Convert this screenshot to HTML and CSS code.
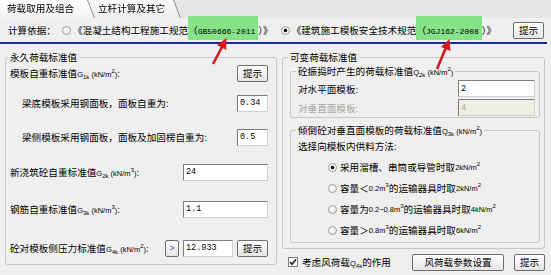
FILE: index.html
```html
<!DOCTYPE html>
<html lang="zh-CN">
<head>
    <meta charset="UTF-8">
    <meta name="viewport" content="width=device-width, initial-scale=1.0">
    <title>荷载取用及组合</title>
    <link rel="stylesheet" href="styles.css">
</head>
<body>
<div class="window">
    <div class="tabbar">
        <div class="tab_wrap"><div class="tab tab_active">荷载取用及组合</div></div>
        <div class="tab_wrap tab_wrap_2"><div class="tab tab_second">立杆计算及其它</div></div>
    </div>

    <div class="basis">
        <span class="caption">计算依据：</span>
        <span class="radio radio_first"></span>
        <span class="norm">《混凝土结构工程施工规范<span class="code_box">（<span class="latin">GB50666-2011</span></span>）》</span>
        <span class="radio radio_on radio_second"></span>
        <span class="norm">《建筑施工模板安全技术规范<span class="code_box">（<span class="latin">JGJ162-2008</span></span>）》</span>
        <button class="btn btn_small btn_basis">提示</button>
    </div>
    <div class="blue_line"></div>

    <div class="panels">
        <fieldset class="group group_left">
            <legend>永久荷载标准值</legend>
            <div class="row row_1">
                <span>模板自重标准值<span class="unit">G<span class="sub">1k</span> (kN/m<span class="sup">2</span>)</span>:</span>
                <button class="btn btn_small">提示</button>
            </div>
            <div class="row row_2 indent">
                <span>梁底模板采用钢面板，面板自重为:</span>
                <input class="field field_short" type="text" value="0.34">
            </div>
            <div class="row row_3 indent">
                <span>梁侧模板采用钢面板，面板及加固楞自重为:</span>
                <input class="field field_short" type="text" value="0.5">
            </div>
            <div class="row row_4">
                <span>新浇筑砼自重标准值<span class="unit">G<span class="sub">2k</span> (kN/m<span class="sup">3</span>)</span>:</span>
                <input class="field field_mid" type="text" value="24">
            </div>
            <div class="row row_5">
                <span>钢筋自重标准值<span class="unit">G<span class="sub">3k</span> (kN/m<span class="sup">3</span>)</span>:</span>
                <input class="field field_mid" type="text" value="1.1">
            </div>
            <div class="row row_6">
                <span>砼对模板侧压力标准值<span class="unit">G<span class="sub">4k</span> (kN/m<span class="sup">2</span>)</span>:</span>
                <div class="controls">
                    <button class="btn btn_arrow">&gt;</button>
                    <input class="field field_calc" type="text" value="12.933">
                    <button class="btn btn_small">提示</button>
                </div>
            </div>
        </fieldset>

        <div class="right_col">
            <fieldset class="group group_right">
                <legend>可变荷载标准值</legend>
                <fieldset class="group sub_1">
                    <legend>砼振捣时产生的荷载标准值<span class="unit">Q<span class="sub">2k</span> (kN/m<span class="sup">2</span>)</span></legend>
                    <div class="row row_h">
                        <span>对水平面模板:</span>
                        <input class="field field_wide" type="text" value="2">
                    </div>
                    <div class="row row_v">
                        <span class="muted">对垂直面模板:</span>
                        <input class="field field_wide" type="text" value="4" disabled>
                    </div>
                </fieldset>
                <fieldset class="group sub_2">
                    <legend>倾倒砼对垂直面模板的荷载标准值<span class="unit">Q<span class="sub">3k</span> (kN/m<span class="sup">2</span>)</span></legend>
                    <div class="method">选择向模板内供料方法:</div>
                    <div class="options">
                        <div class="option"><span class="radio radio_on"></span>采用溜槽、串筒或导管时取<span class="unit">2kN/m<span class="sup">2</span></span></div>
                        <div class="option"><span class="radio"></span>容量＜<span class="unit">0.2m<span class="sup">3</span></span> 的运输器具时取<span class="unit">2kN/m<span class="sup">2</span></span></div>
                        <div class="option"><span class="radio"></span>容量为<span class="unit">0.2~0.8m<span class="sup">3</span></span> 的运输器具时取<span class="unit">4kN/m<span class="sup">2</span></span></div>
                        <div class="option"><span class="radio"></span>容量＞<span class="unit">0.8m<span class="sup">3</span></span> 的运输器具时取<span class="unit">6kN/m<span class="sup">2</span></span></div>
                    </div>
                </fieldset>
            </fieldset>
            <div class="wind_row">
                <span class="check"><svg width="8" height="8" viewBox="0 0 8 8"><path d="M1 4 L3 6.2 L7 1.5" fill="none" stroke="#1b1b1b" stroke-width="1.6"/></svg></span>
                <span class="wind_text">考虑风荷载<span class="unit">Q<span class="sub">4k</span></span>的作用</span>
                <button class="btn btn_wind">风荷载参数设置</button>
                <button class="btn btn_small">提示</button>
            </div>
        </div>
    </div>

    <!-- red annotation arrows drawn over the form -->
    <svg class="arrows" width="551" height="275" viewBox="0 0 551 275">
        <line x1="213" y1="64" x2="222" y2="47" stroke="#d21b1b" stroke-width="2.6"/>
        <polygon points="226.5,38 226.2,50 217,45" fill="#d21b1b"/>
        <line x1="437" y1="69" x2="445.5" y2="48.5" stroke="#d21b1b" stroke-width="2.6"/>
        <polygon points="449.5,39 450.5,51 441,47" fill="#d21b1b"/>
    </svg>
</div>
</body>
</html>
```

FILE: styles.css
```css
body{
    margin: 0;
    background-color: #efefef;
    font-family: "Noto Sans CJK SC", sans-serif;
    font-size: 9.6px;
    color: #000;
}

.window{
    position: relative;
    width: 551px;
    height: 275px;
    overflow: hidden;
}

/* tabs */
.tabbar{
    display: flex;
    height: 18px;
    background-color: #e6e6e6;
}

.tab_wrap{
    filter: drop-shadow(1px 0 0 #8c8c8c);
}

.tab_wrap_2{
    margin-left: -7px;
    filter: drop-shadow(1px 0 0 #8c8c8c) drop-shadow(-1px 0 0 #8c8c8c);
}

.tab{
    height: 18px;
    line-height: 17px;
    box-sizing: border-box;
}

.tab_active{
    width: 95px;
    padding-left: 7px;
    background: linear-gradient(#ffffff, #f2f2f2);
    clip-path: polygon(0 0, 88px 0, 95px 100%, 0 100%);
}

.tab_second{
    width: 92px;
    padding-left: 10px;
    background: linear-gradient(#fbfbfb, #ececec);
    clip-path: polygon(0 0, 85px 0, 92px 100%, 7px 100%);
}

/* basis row */
.basis{
    display: flex;
    align-items: center;
    height: 24px;
    padding-left: 8px;
    white-space: nowrap;
}

.radio{
    display: inline-block;
    width: 9px;
    height: 9px;
    box-sizing: border-box;
    border: 1px solid #9c9c9c;
    border-radius: 50%;
    background: radial-gradient(circle at 40% 40%, #ffffff, #e2e2e2);
    flex: none;
}

.radio_on{
    background: radial-gradient(circle, #1c1c1c 0 1.6px, #ffffff 2.2px, #e2e2e2);
}

.radio_first{
    margin-left: 6px;
}

.radio_second{
    margin-left: 8px;
}

.norm{
    margin-left: 2px;
}

.code_box{
    background-color: #86e286;
    padding: 7px 3px 3px 0;
}

.latin{
    font-family: "Liberation Mono", monospace;
    font-size: 8px;
}

.btn_basis{
    margin-left: auto;
    margin-right: 7px;
}

.blue_line{
    width: 547px;
    height: 2px;
    background-color: #1c2aa6;
}

/* buttons and fields */
.btn{
    height: 17px;
    box-sizing: border-box;
    padding: 0;
    border: 1px solid #6e6e6e;
    border-radius: 2px;
    background: linear-gradient(#ffffff, #e4e4e4);
    font-family: inherit;
    font-size: 9.6px;
    color: #000;
    line-height: 14px;
}

.btn_small{
    width: 31px;
}

.btn_arrow{
    width: 14px;
    font-family: "Liberation Sans", sans-serif;
    color: #3f5f9f;
}

.btn_wind{
    width: 92px;
    margin-left: auto;
    margin-right: 10px;
}

.field{
    height: 17px;
    box-sizing: border-box;
    margin: 0;
    padding: 0 2px;
    border: 1px solid;
    border-color: #7c7c7c #d0d0d0 #d0d0d0 #7c7c7c;
    background-color: #fff;
    font-family: "Liberation Mono", monospace;
    font-size: 8.5px;
    color: #000;
}

.field:disabled{
    background-color: #efeee2;
    color: #a5a59a;
}

.field_short{
    width: 31px;
}

.field_mid{
    width: 85px;
}

.field_calc{
    width: 50px;
}

.field_wide{
    width: 77px;
}

/* units with sub/superscripts */
.unit{
    font-family: "Liberation Sans", sans-serif;
    font-size: 7.5px;
}

.sub{
    font-size: 6px;
    line-height: 0;
    vertical-align: -2px;
}

.sup{
    font-size: 6px;
    line-height: 0;
    vertical-align: 4px;
}

/* group boxes */
.panels{
    display: flex;
    gap: 5px;
    padding-left: 5px;
    margin-top: 7px;
}

.group{
    margin: 0;
    min-width: 0;
    box-sizing: border-box;
    border: 1px solid #c6c6c6;
    border-radius: 3px;
}

.group legend{
    height: 12px;
    padding: 0 2px;
    margin-left: -2px;
    line-height: 12px;
    white-space: nowrap;
}

.group_left{
    width: 272px;
    height: 214px;
    padding: 0 8px 0 4px;
}

.row{
    display: flex;
    align-items: center;
    justify-content: space-between;
    height: 18px;
    white-space: nowrap;
}

.indent{
    padding-left: 12px;
}

.row_1{ margin-top: 1px; }
.row_2{ margin-top: 12px; }
.row_3{ margin-top: 16px; }
.row_4{ margin-top: 17px; }
.row_5{ margin-top: 19px; }
.row_6{ margin-top: 21px; }

.controls{
    display: flex;
    gap: 4px;
}

.right_col{
    display: flex;
    flex-direction: column;
}

.group_right{
    width: 263px;
    height: 198px;
    padding: 0 4px 0 7px;
}

.sub_1{
    height: 53px;
    margin-top: 2px;
    padding: 0 4px 0 7px;
}

.row_h{
    height: 17px;
    margin-top: 3px;
}

.row_v{
    height: 17px;
    margin-top: 2px;
}

.muted{
    color: #a7a79c;
}

.sub_2{
    height: 119px;
    margin-top: 6px;
    padding: 0 4px 0 7px;
}

.method{
    margin-top: 4px;
    line-height: 12px;
}

.options{
    display: flex;
    flex-direction: column;
    gap: 7px;
    margin-top: 8px;
    padding-left: 30px;
}

.option{
    display: flex;
    align-items: center;
    height: 14px;
    white-space: nowrap;
}

.option .radio{
    margin-right: 3px;
}

.wind_row{
    display: flex;
    align-items: center;
    height: 18px;
    margin-top: 4px;
    padding-left: 6px;
    white-space: nowrap;
}

.check{
    display: inline-flex;
    align-items: center;
    justify-content: center;
    width: 10px;
    height: 10px;
    box-sizing: border-box;
    border: 1px solid #7c7c7c;
    background-color: #fff;
}

.wind_text{
    margin-left: 4px;
}

.arrows{
    position: absolute;
    left: 0;
    top: 0;
    pointer-events: none;
}
```
